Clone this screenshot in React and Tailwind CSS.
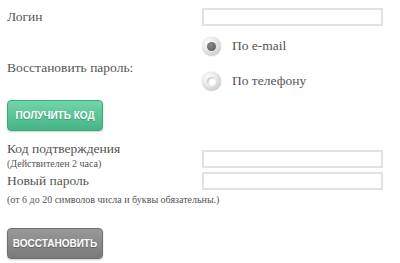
import React, { useState } from "react"

function Radio({ checked, label, onClick }) {
  return (
    <label className="flex items-center cursor-pointer" onClick={onClick}>
      <span className="w-[19px] h-[19px] rounded-full flex items-center justify-center bg-[radial-gradient(circle_at_35%_30%,#ffffff_0%,#e6e6e6_45%,#bdbdbd_100%)] shadow-[0_0_1px_#999]">
        {checked ? (
          <span className="w-[9px] h-[9px] rounded-full bg-[radial-gradient(circle_at_40%_35%,#8a8a8a_0%,#555_100%)]" />
        ) : (
          <span className="w-[9px] h-[9px] rounded-full bg-white shadow-[inset_1px_1px_2px_#bbb]" />
        )}
      </span>
      <span className="ml-[11px] text-[13.5px] text-[#555]">{label}</span>
    </label>
  )
}

function TextInput() {
  return (
    <input
      type="text"
      className="w-[181px] h-[18px] border-2 border-[#e2e2e2] bg-white outline-none"
    />
  )
}

export default function App() {
  const [method, setMethod] = useState("email")

  return (
    <div className="w-[400px] h-[263px] bg-white px-[7px] font-['Liberation_Serif',serif] text-[#555]">
      {/* login */}
      <div className="flex items-center pt-[8px] h-[26px]">
        <div className="w-[195px] text-[13.5px]">Логин</div>
        <TextInput />
      </div>

      {/* method */}
      <div className="flex mt-[10px]">
        <div className="w-[195px] text-[13.5px] pt-[22px]">Восстановить пароль:</div>
        <div className="flex flex-col gap-[15px]">
          <Radio checked={method === "email"} label="По e-mail" onClick={() => setMethod("email")} />
          <Radio checked={method === "phone"} label="По телефону" onClick={() => setMethod("phone")} />
        </div>
      </div>

      <button className="mt-[8px] w-[96px] h-[31px] rounded-[4px] bg-gradient-to-b from-[#72d5aa] to-[#45b587] border border-[#3fa97c] text-white text-[10px] font-bold font-['Liberation_Sans',sans-serif] [text-shadow:0_1px_1px_rgba(0,0,0,0.25)] shadow-[0_1px_2px_rgba(0,0,0,0.2)]">
        ПОЛУЧИТЬ КОД
      </button>

      {/* code */}
      <div className="flex items-start mt-[9px]">
        <div className="w-[195px]">
          <div className="text-[13.5px] leading-[17px]">Код подтверждения</div>
          <div className="text-[10px] leading-[12px] mt-[1px]">(Действителен 2 часа)</div>
        </div>
        <div className="pt-[7px]">
          <TextInput />
        </div>
      </div>

      <div className="flex items-center mt-[1px]">
        <div className="w-[195px] text-[13.5px] leading-[17px]">Новый пароль</div>
        <TextInput />
      </div>
      <div className="text-[10px] leading-[12px] mt-[4px]">
        (от 6 до 20 символов числа и буквы обязательны.)
      </div>

      <button className="mt-[22px] w-[96px] h-[31px] rounded-[4px] bg-gradient-to-b from-[#999] to-[#7a7a7a] border border-[#707070] text-white text-[10px] font-bold font-['Liberation_Sans',sans-serif] [text-shadow:0_1px_1px_rgba(0,0,0,0.3)] shadow-[0_1px_2px_rgba(0,0,0,0.2)]">
        ВОССТАНОВИТЬ
      </button>
    </div>
  )
}
